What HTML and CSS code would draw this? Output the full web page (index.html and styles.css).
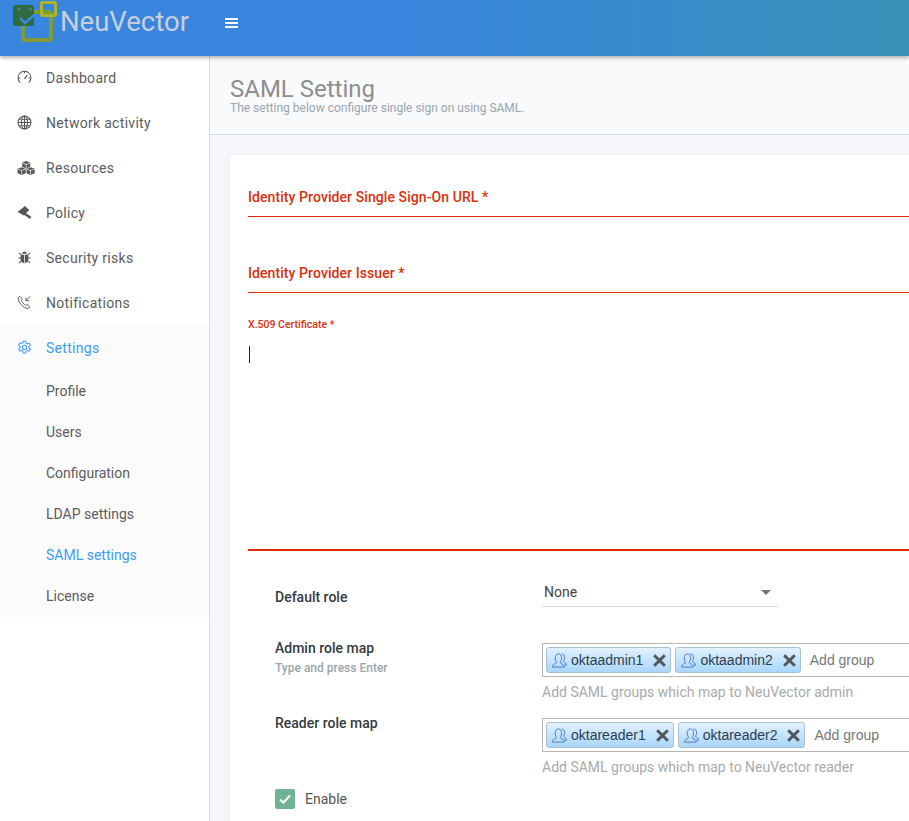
FILE: index.html
```html
<!DOCTYPE html>
<html lang="en">
<head>
<meta charset="UTF-8" />
<title>SAML Setting</title>
<link rel="stylesheet" href="styles.css">
</head>
<body>

  <!-- Top bar -->
  <header class="topbar">
    <div class="logo">
      <svg class="logo-mark" width="60" height="44" viewBox="0 0 60 44">
        <rect x="23" y="12" width="28" height="28" rx="2" fill="none" stroke="#7f9c35" stroke-width="4"/>
        <rect x="14.500" y="6.500" width="18" height="18" rx="1" fill="#2f6b3e" stroke="#2f6b3e" stroke-width="3"/>
        <rect x="41.500" y="2.500" width="14" height="13" rx="1" fill="none" stroke="#a9b52c" stroke-width="3"/>
        <path d="M20 18l5 5 9-8" fill="none" stroke="#3d88dc" stroke-width="2.500"/>
        <path d="M17 9h4M29 9h3" fill="none" stroke="#3a7f8c" stroke-width="3"/>
      </svg>
      <span class="logo-text">NeuVector</span>
    </div>
    <button class="menu-btn" aria-label="Menu"><span></span><span></span><span></span></button>
  </header>

  <div class="layout">
    <!-- Sidebar -->
    <nav class="sidebar">
      <a class="nav-item">
        <svg class="nav-icon" viewBox="0 0 16 16" fill="none" stroke="#555" stroke-width="1.100"><path d="M3.400 13.400A6.900 6.900 0 1 1 12.600 13.400"/><path d="M8 9.500l3-4" stroke-width="1.300"/><path d="M8 1.500v2M1.500 8.500h2M12.500 8.500h2"/></svg>
        Dashboard
      </a>
      <a class="nav-item">
        <svg class="nav-icon" viewBox="0 0 16 16" fill="none" stroke="#555" stroke-width="1.100"><circle cx="8" cy="8" r="6.900"/><ellipse cx="8" cy="8" rx="3.200" ry="6.900"/><path d="M8 1.100v13.800M1.100 8h13.800M2.200 4.600h11.600M2.200 11.400h11.600"/></svg>
        Network activity
      </a>
      <a class="nav-item">
        <svg class="nav-icon nav-icon-wide" viewBox="0 0 18 14" fill="#555"><path d="M9.200 0l4 1.500v4.300l-4 1.600-4-1.600V1.500z"/><path d="M4.700 6.200l4 1.500v4.500l-4 1.800-4.200-1.800V7.700z"/><path d="M13.500 6.200l4.200 1.500v4.500L13.500 14l-4-1.800V7.700z"/><path d="M5.400 2l3.800 1.500L13 2M.7 8l4 1.500L8.500 8M9.700 8l3.800 1.500L17.500 8M9.200 3.500v3.700M4.700 9.500v4M13.500 9.500v4" fill="none" stroke="#fff" stroke-width=".7"/></svg>
        Resources
      </a>
      <a class="nav-item">
        <svg class="nav-icon" viewBox="0 0 16 14" fill="#555"><path d="M8.500 0l4.500 4.200-5.600 6L.5 6.500z"/><path d="M8 6.800l7.300 4.600-1.500 2.600-7.300-5.400z"/></svg>
        Policy
      </a>
      <a class="nav-item">
        <svg class="nav-icon" viewBox="0 0 16 16" fill="#555"><path d="M5.500 4a2.500 2.500 0 0 1 5 0zM4.500 5h7c.6 1 .8 2 .8 3.500 0 3-1.600 5.500-4.300 5.500s-4.300-2.500-4.300-5.500C3.700 7 3.900 6 4.500 5z"/><path d="M2 3l2.500 2.500M14 3l-2.500 2.500M1.500 8.500h2.500M14.500 8.500H12M2 14l2.500-2.500M14 14l-2.500-2.500" stroke="#555" stroke-width="1.100"/><path d="M8 5v9" stroke="#fff" stroke-width=".8"/></svg>
        Security risks
      </a>
      <a class="nav-item">
        <svg class="nav-icon" viewBox="0 0 16 16" fill="none" stroke="#555" stroke-width="1"><path d="M3 1.500L1.300 3c-.4 4.500 5.200 11 10.500 11.500l2-1.900-2.700-2.700-1.800 1.300C7.500 10 5.300 7.500 4.500 5.700L5.800 4.200z"/><path d="M14 1.500L9.500 6M9.500 2.800V6h3.200"/></svg>
        Notifications
      </a>

      <div class="nav-group">
        <a class="nav-item active">
          <svg class="nav-icon" viewBox="0 0 16 16" fill="none" stroke="#3f9cf5" stroke-width="1.100"><path d="M6.700 1.300h2.600l.4 2 1.300.7 1.900-.7 1.300 2.300-1.500 1.300v1.400l1.500 1.300-1.300 2.300-1.900-.7-1.300.7-.4 2H6.700l-.4-2-1.300-.7-1.900.7-1.300-2.300 1.500-1.300V6.600L1.800 5.300l1.300-2.300 1.900.7 1.300-.7z"/><circle cx="8" cy="7.900" r="2.300"/></svg>
          Settings
        </a>
        <a class="sub-item">Profile</a>
        <a class="sub-item">Users</a>
        <a class="sub-item">Configuration</a>
        <a class="sub-item">LDAP settings</a>
        <a class="sub-item active">SAML settings</a>
        <a class="sub-item">License</a>
      </div>
    </nav>

    <!-- Main -->
    <main class="main">
      <div class="page-head">
        <h1>SAML Setting</h1>
        <p>The setting below configure single sign on using SAML.</p>
      </div>

      <section class="card">
        <div class="field field-url">
          <label>Identity Provider Single Sign-On URL *</label>
        </div>
        <div class="field field-issuer">
          <label>Identity Provider Issuer *</label>
        </div>
        <div class="field field-cert">
          <label>X.509 Certificate *</label>
          <span class="caret"></span>
        </div>

        <div class="role-form">
          <div class="role-row row-default">
            <div class="role-label"><b>Default role</b></div>
            <div class="select">None<i class="select-arrow"></i></div>
          </div>

          <div class="role-row row-admin">
            <div class="role-label"><b>Admin role map</b><small>Type and press Enter</small></div>
            <div class="role-value">
              <div class="tag-input">
                <span class="tag"><svg class="tag-user" viewBox="0 0 16 16"><use href="#users"/></svg>oktaadmin1<em class="tag-x"></em></span>
                <span class="tag"><svg class="tag-user" viewBox="0 0 16 16"><use href="#users"/></svg>oktaadmin2<em class="tag-x"></em></span>
                <span class="tag-placeholder">Add group</span>
              </div>
              <p class="hint">Add SAML groups which map to NeuVector admin</p>
            </div>
          </div>

          <div class="role-row row-reader">
            <div class="role-label"><b>Reader role map</b></div>
            <div class="role-value">
              <div class="tag-input">
                <span class="tag"><svg class="tag-user" viewBox="0 0 16 16"><use href="#users"/></svg>oktareader1<em class="tag-x"></em></span>
                <span class="tag"><svg class="tag-user" viewBox="0 0 16 16"><use href="#users"/></svg>oktareader2<em class="tag-x"></em></span>
                <span class="tag-placeholder">Add group</span>
              </div>
              <p class="hint">Add SAML groups which map to NeuVector reader</p>
            </div>
          </div>

          <div class="enable">
            <span class="check"><svg width="14" height="14" viewBox="0 0 14 14" fill="none" stroke="#fff" stroke-width="2"><path d="M2 7.500l3.300 3.300L12 3.500"/></svg></span>
            Enable
          </div>
        </div>
      </section>
    </main>
  </div>

  <svg width="0" height="0" class="defs">
    <symbol id="users" viewBox="0 0 16 16">
      <g fill="none" stroke="#4a76c8" stroke-width="1">
        <path d="M.5 15c0-2.800 2.200-3.200 3.800-4 .7-.4.600-1.300.1-1.900C3.600 8.100 3.300 6.800 3.400 5 3.600 2.500 4.800 1 6.800 1s3.300 1.500 3.400 4c.1 1.800-.2 3.100-1 4.100-.5.600-.6 1.500.1 1.900 1.600.8 3.800 1.200 3.800 4z"/>
        <path d="M10.200 1c2 0 3.100 1.500 3.200 3.500.1 1.700-.2 2.900-1 3.800-.3.400-.3 1.100.2 1.400 1.100.6 2.900 1 2.900 3.300h-2.500"/>
      </g>
    </symbol>
  </svg>

</body>
</html>
```

FILE: styles.css
```css
* {
  box-sizing: border-box;
}

html, body {
  margin: 0;
  padding: 0;
  height: 821px;
  overflow: hidden;
  font-family: Roboto, "Liberation Sans", sans-serif;
  background: #fff;
}

.defs {
  position: absolute;
}

/* Top bar */
.topbar {
  height: 56px;
  display: flex;
  background: linear-gradient(90deg, #3a86de 0%, #3a86de 45%, #3892b8 100%);
  box-shadow: 0 2px 4px rgba(0, 0, 0, 0.3);
  position: relative;
  z-index: 5;
}

.logo {
  width: 225px;
  height: 56px;
  display: flex;
  flex-shrink: 0;
}

.logo-mark {
  flex-shrink: 0;
}

.logo-text {
  font-size: 27.500px;
  line-height: 44px;
  color: #cfd3d8;
  opacity: 0.95;
}

.menu-btn {
  width: 13px;
  height: 10px;
  margin-top: 18px;
  padding: 0;
  border: none;
  background: none;
  display: flex;
  flex-direction: column;
  gap: 2px;
}

.menu-btn span {
  display: block;
  height: 2px;
  background: #fff;
}

/* Sidebar */
.layout {
  display: flex;
  height: 765px;
}

.sidebar {
  width: 210px;
  flex-shrink: 0;
  background: #fff;
  border-right: 1px solid #dcdcdc;
}

.nav-item {
  height: 45px;
  display: flex;
  align-items: center;
  padding: 0 0 2px 17px;
  font-size: 14px;
  letter-spacing: 0.3px;
  color: #5c5c5c;
}

.nav-icon {
  width: 15px;
  height: 15px;
  margin-right: 14px;
  flex-shrink: 0;
}

.nav-icon-wide {
  width: 18px;
  height: 14px;
  margin-right: 11px;
}

.nav-item.active {
  color: #3f9cf5;
}

.nav-group {
  background: #fbfbfb;
  padding-bottom: 0;
  height: 291px;
}

.sub-item {
  display: flex;
  align-items: center;
  height: 41px;
  padding-left: 46px;
  font-size: 14px;
  color: #5c5c5c;
}

.nav-item + .sub-item {
  margin-top: -1px;
}

.sub-item.active {
  color: #3f9cf5;
}

/* Main */
.main {
  flex: 1;
  min-width: 0;
  background: #f4f6fa;
  overflow: hidden;
}

.page-head {
  height: 79px;
  padding: 20px 0 0 20px;
  background: #f9fafc;
  border-bottom: 1px solid #cfd8e0;
}

.page-head h1 {
  margin: 0;
  font-size: 24px;
  font-weight: 400;
  line-height: 26px;
  color: #8e8e8e;
}

.page-head p {
  margin: 0;
  font-size: 12px;
  line-height: 13px;
  color: #9aa5ad;
}

.card {
  margin: 20px 0 0 20px;
  width: 720px;
  height: 700px;
  background: #fff;
  border-radius: 5px 0 0 0;
  box-shadow: 0 0 4px rgba(0, 0, 0, 0.04);
  padding: 0 0 0 18px;
}

.field {
  border-bottom: 1px solid #de2c00;
  color: #d9300d;
}

.field label {
  display: block;
  font-weight: 500;
  font-size: 14px;
  letter-spacing: 0.08px;
}

.field-url {
  height: 62px;
  padding-top: 34px;
}

.field-issuer {
  height: 76px;
  padding-top: 48px;
}

.field-cert {
  height: 258px;
  border-bottom-width: 2px;
  padding-top: 25px;
}

.field-cert label {
  font-size: 10.500px;
  letter-spacing: 0;
}

.caret {
  display: block;
  width: 1px;
  height: 17px;
  margin: 15px 0 0 1px;
  background: #222;
}

.role-form {
  padding-left: 27px;
}

.role-row {
  display: flex;
  font-size: 14px;
  color: #333;
}

.role-label {
  width: 267px;
  flex-shrink: 0;
}

.role-label b {
  display: block;
  font-weight: 500;
  color: #343a40;
}

.role-label small {
  display: block;
  margin-top: 5px;
  font-size: 12px;
  font-weight: 500;
  color: #9aa6ae;
}

.row-default {
  margin-top: 38px;
  height: 46px;
}

.select {
  width: 236px;
  height: 24px;
  margin-top: -6px;
  position: relative;
  border-bottom: 1px solid #ddd;
  padding: 1px 0 0 2px;
  line-height: 17px;
  font-size: 14px;
  color: #444;
}

.select-arrow {
  position: absolute;
  right: 7px;
  top: 7px;
  border-left: 5px solid transparent;
  border-right: 5px solid transparent;
  border-top: 5px solid #757575;
}

.row-admin {
  margin-top: 8px;
  height: 75px;
}

.row-reader {
  height: 75px;
}

.row-admin .role-label, .row-reader .role-label {
  margin-top: -3px;
}

.role-value {
  width: 400px;
}

.tag-input {
  height: 34px;
  border: 1px solid #b5b5b5;
  border-right: none;
  display: flex;
  align-items: center;
  padding-left: 3px;
  gap: 4px;
}

.tag {
  height: 26px;
  display: flex;
  align-items: center;
  padding: 0 4px 0 5px;
  font-family: "Liberation Sans", Arial, sans-serif;
  font-size: 14px;
  color: #2c3e50;
  border: 1px solid #a9bfd2;
  border-radius: 3px;
  background: linear-gradient(#e2f1fd, #aad6fb);
}

.tag-user {
  width: 15px;
  height: 15px;
  margin-right: 4px;
}

.tag-x {
  width: 13px;
  height: 13px;
  margin-left: 10px;
  position: relative;
}

.tag-x::before, .tag-x::after {
  content: "";
  position: absolute;
  left: 5px;
  top: -1px;
  width: 3px;
  height: 15px;
  background: #50565c;
  transform: rotate(45deg);
}

.tag-x::after {
  transform: rotate(-45deg);
}

.tag-placeholder {
  margin-left: 5px;
  font-family: "Liberation Sans", Arial, sans-serif;
  font-size: 14px;
  color: #777;
}

.hint {
  margin: 7px 0 0;
  font-size: 14px;
  line-height: 17px;
  color: #aaa;
}

.enable {
  display: flex;
  align-items: center;
  font-size: 14px;
  color: #555;
  margin-top: -4px;
}

.check {
  width: 20px;
  height: 20px;
  margin-right: 10px;
  display: flex;
  align-items: center;
  justify-content: center;
  border-radius: 2px;
  background: #6fb394;
}
```
